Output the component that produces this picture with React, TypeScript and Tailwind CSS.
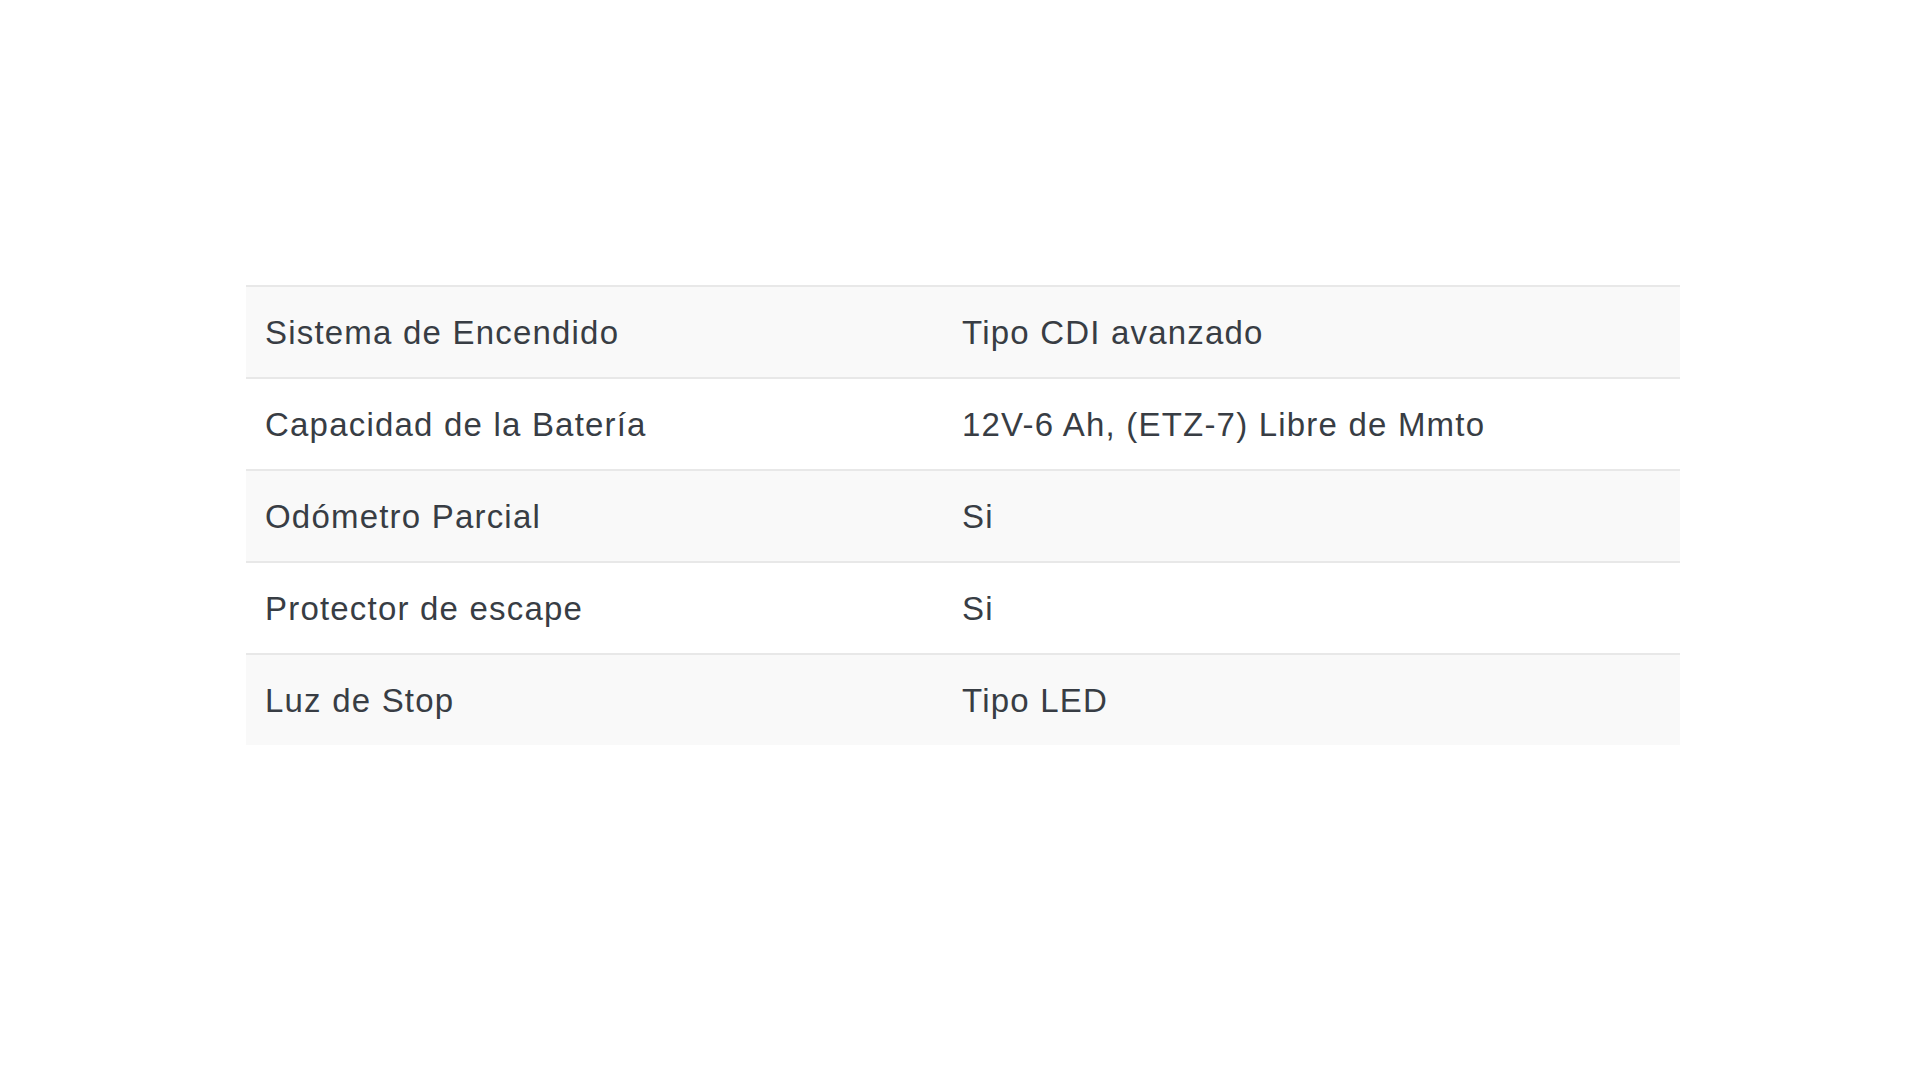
import React from "react";

const rows: [string, string][] = [
  ["Sistema de Encendido", "Tipo CDI avanzado"],
  ["Capacidad de la Batería", "12V-6 Ah, (ETZ-7) Libre de Mmto"],
  ["Odómetro Parcial", "Si"],
  ["Protector de escape", "Si"],
  ["Luz de Stop", "Tipo LED"],
];

export default function App() {
  return (
    <div className="min-h-screen w-full bg-white" style={{ fontFamily: '"Liberation Sans", Arial, sans-serif' }}>
      <div className="pt-[285px] pl-[246px]">
        <div className="w-[1434px] flex flex-col text-[33px] leading-[48px] tracking-[1.2px] text-[#383d44]">
          {rows.map(([k, v], i) => (
            <div
              key={k}
              className={`flex border-t-2 border-[#e8e8e8] ${i % 2 === 0 ? "bg-[#f9f9f9]" : "bg-white"}`}
            >
              <div className="w-[697px] pl-[19px] pt-[22px] pb-[20px]">{k}</div>
              <div className="flex-1 pl-[19px] pt-[22px] pb-[20px]">{v}</div>
            </div>
          ))}
        </div>
      </div>
    </div>
  );
}
